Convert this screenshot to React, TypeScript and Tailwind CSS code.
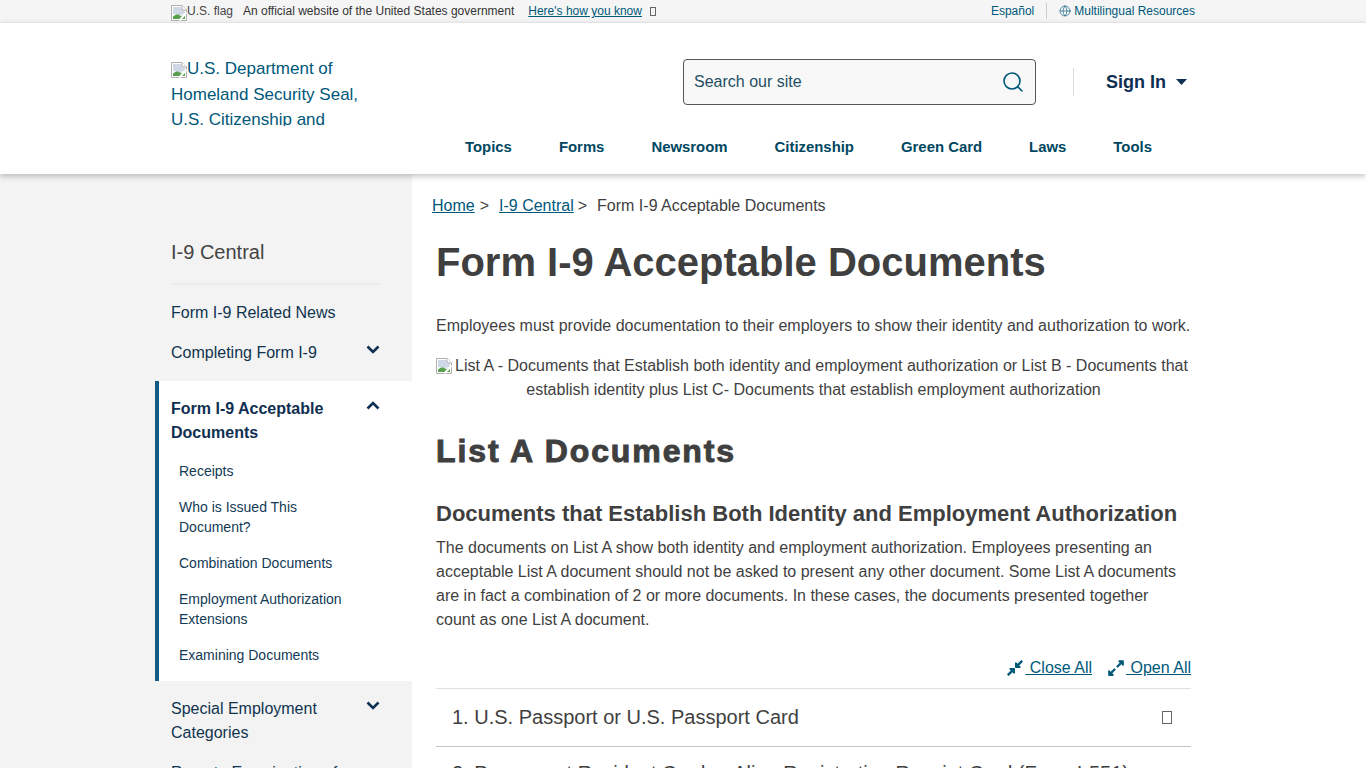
import { Globe, Search } from "lucide-react";
import { FaCompressAlt, FaExpandAlt } from "react-icons/fa";

const teal = "text-[#00587a]";

const navItems = ["Topics", "Forms", "Newsroom", "Citizenship", "Green Card", "Laws", "Tools"];

const subItems = [
  { label: ["Receipts"] },
  { label: ["Who is Issued This", "Document?"] },
  { label: ["Combination Documents"] },
  { label: ["Employment Authorization", "Extensions"] },
  { label: ["Examining Documents"] },
];

// what the browser paints for an image that failed to load
function BrokenImage({ className = "" }: { className?: string }) {
  return (
    <svg width="16" height="16" viewBox="0 0 16 16" className={`inline-block shrink-0 align-text-bottom ${className}`}>
      <path d="M0.5 0.5H11L15.5 5V15.5H0.5Z" fill="#fff" stroke="#b0b0b0" />
      <path d="M2 2H10.5V5.5H14V9L9 10L2 9Z" fill="#cfd8e6" />
      <path d="M2 14V11.5C5 8.5 8 9 10 11L14 10V14Z" fill="#5a9e4f" />
      <path d="M15.5 7.5L8.5 15.5" stroke="#fff" strokeWidth="2" />
      <path d="M11 0.5V5H15.5" fill="#fff" stroke="#b0b0b0" />
    </svg>
  );
}

function Chevron({ up }: { up?: boolean }) {
  return (
    <svg width="14" height="9" viewBox="0 0 14 9" fill="none" className="shrink-0">
      <path
        d={up ? "M1.5 7.5L7 2L12.5 7.5" : "M1.5 1.5L7 7L12.5 1.5"}
        stroke="#0f2f52"
        strokeWidth="2.6"
      />
    </svg>
  );
}

function Tofu({ className }: { className: string }) {
  return <span className={`inline-block border border-[#666] ${className}`} />;
}

function TopBar() {
  return (
    <div className="h-[23px] bg-[#f5f5f5] border-b border-[#f0f0f0]">
      <div className="w-[1024px] ml-[171px] h-[22px] flex items-center text-[12px] font-['Liberation_Sans',sans-serif]">
        <span className="flex items-center text-[#444] w-[72px]">
          <BrokenImage className="mt-[4px]" />
          U.S. flag
        </span>
        <span className="text-[#333]">An official website of the United States government</span>
        <a className={`ml-[14px] underline ${teal}`}>Here's how you know</a>
        <Tofu className="ml-[8px] w-[6px] h-[9px]" />
        <a className={`ml-auto ${teal}`}>Español</a>
        <span className="mx-[12px] h-[16px] w-px bg-[#ccc]" />
        <a className={`flex items-center gap-[3px] ${teal}`}>
          <Globe size={12} strokeWidth={1.25} />
          Multilingual Resources
        </a>
      </div>
    </div>
  );
}

function Header() {
  return (
    <header className="relative z-10 h-[151px] bg-white shadow-[0_2px_6px_rgba(0,0,0,0.25)]">
      <div className="w-[1024px] ml-[171px] flex">
        <a className="mt-[33px] block w-[190px] h-[70px] overflow-hidden text-[17px] leading-[25.5px] text-[#00587a]">
          <BrokenImage />
          U.S. Department of Homeland Security Seal, U.S. Citizenship and Immigration Services
        </a>
        <div className="ml-[322px] mt-[36px] w-[353px] h-[46px] rounded-[4px] border border-[#555] bg-[#f8f8f8] flex items-center pl-[10px] pr-[10px]">
          <span className="text-[16px] text-[#1f4f63]">Search our site</span>
          <Search size={24} strokeWidth={1.6} className={`ml-auto ${teal}`} />
        </div>
        <div className="ml-[37px] mt-[45px] h-[28px] w-px bg-[#ddd]" />
        <div className="ml-[32px] mt-[45px] h-[28px] flex items-center gap-[10px] text-[18px] font-bold text-[#0f2f52]">
          Sign In
          <svg width="11" height="6" viewBox="0 0 11 6">
            <path d="M0 0H11L5.5 6Z" fill="#0f2f52" />
          </svg>
        </div>
      </div>
      <nav className="absolute top-[114px] left-[465px] flex gap-[47px] text-[14.9px] font-bold leading-[20px] text-[#00475f]">
        {navItems.map((item) => (
          <a key={item}>{item}</a>
        ))}
      </nav>
    </header>
  );
}

function Sidebar() {
  return (
    <aside className="w-[412px] shrink-0 bg-[#f3f3f3] text-[16px] leading-[24px] text-[#10334f]">
      <div className="pl-[171px] pr-[32px] pt-[64px]">
        <div className="text-[20px] leading-[28px] text-[#444] pb-[17px] border-b-2 border-[#ebebeb] -mr-[1px]">I-9 Central</div>
        <div className="mt-[16px]">Form I-9 Related News</div>
        <div className="mt-[16px] flex justify-between items-start">
          <span>Completing Form I-9</span>
          <span className="pt-[4px]"><Chevron /></span>
        </div>
      </div>
      <div className="mt-[16px] ml-[155px] h-[300px] bg-white border-l-4 border-[#155a85] pl-[12px] pr-[32px] pt-[16px]">
        <div className="flex justify-between items-start font-bold text-[#0f2f52]">
          <span className="w-[180px]">Form I-9 Acceptable Documents</span>
          <span className="pt-[4px]"><Chevron up /></span>
        </div>
        <div className="mt-[16px] pl-[8px] flex flex-col gap-[16px] text-[14px] leading-[20px] text-[#133a55]">
          {subItems.map((s) => (
            <div key={s.label[0]}>
              {s.label.map((line) => (
                <div key={line}>{line}</div>
              ))}
            </div>
          ))}
        </div>
      </div>
      <div className="pl-[171px] pr-[32px] pt-[16px]">
        <div className="flex justify-between items-start">
          <span className="w-[180px]">Special Employment Categories</span>
          <span className="pt-[4px]"><Chevron /></span>
        </div>
        <div className="mt-[16px]">Remote Examination of</div>
      </div>
    </aside>
  );
}

function Main() {
  return (
    <main className="w-[780px] pl-[20px] text-[#3f3f3f] text-[16px] leading-[24px]">
      <div className="pt-[20px] flex whitespace-pre">
        <a className={`underline ${teal}`}>Home</a>
        <span className="ml-[5px]">&gt;</span>
        <a className={`ml-[10px] underline ${teal}`}>I-9 Central</a>
        <span className="ml-[4px]">&gt;</span>
        <span className="ml-[10px]">Form I-9 Acceptable Documents</span>
      </div>
      <div className="pl-[4px] w-[759px]">
        <h1 className="mt-[19px] text-[40px] leading-[50px] font-bold text-[#3f3f3f]">
          Form I-9 Acceptable Documents
        </h1>
        <p className="mt-[27px] whitespace-nowrap">
          Employees must provide documentation to their employers to show their identity and authorization to work.
        </p>
        <p className="mt-[16px] text-center">
          <BrokenImage className="-ml-[3px] mr-[3px]" />
          List A - Documents that Establish both identity and employment authorization or List B - Documents that
          establish identity plus List C- Documents that establish employment authorization
        </p>
        <h2 className="mt-[29px] text-[32px] leading-[40px] font-bold tracking-[1.9px] [-webkit-text-stroke:1px_#3f3f3f]">
          List A Documents
        </h2>
        <h3 className="mt-[28px] text-[22px] leading-[30px] font-bold">
          Documents that Establish Both Identity and Employment Authorization
        </h3>
        <p className="mt-[7px] w-[750px]">
          The documents on List A show both identity and employment authorization. Employees presenting an acceptable
          List A document should not be asked to present any other document. Some List A documents are in fact a
          combination of 2 or more documents. In these cases, the documents presented together count as one List A
          document.
        </p>
        <div className="mt-[24px] flex justify-end gap-[15px]">
          <a className={`flex items-center whitespace-pre underline ${teal}`}>
            <FaCompressAlt size={18} className="mr-[1px]" />
            {" Close All"}
          </a>
          <a className={`flex items-center whitespace-pre underline ${teal}`}>
            <FaExpandAlt size={18} className="mr-[1px]" />
            {" Open All"}
          </a>
        </div>
        <div className="mt-[8px] border-t border-[#e0e0e0] h-[58px] flex items-center justify-between pl-[16px] pr-[19px] text-[20px]">
          <span className="-mt-[2px]">1. U.S. Passport or U.S. Passport Card</span>
          <Tofu className="w-[10px] h-[13px]" />
        </div>
        <div className="border-t border-[#c4c4c4] pl-[16px] pt-[14px] text-[20px] whitespace-nowrap">
          2. Permanent Resident Card or Alien Registration Receipt Card (Form I-551)
        </div>
      </div>
    </main>
  );
}

export default function App() {
  return (
    <div className="h-[768px] overflow-hidden bg-white font-['Liberation_Sans',Arial,sans-serif]">
      <TopBar />
      <Header />
      <div className="flex h-[594px]">
        <Sidebar />
        <Main />
      </div>
    </div>
  );
}
